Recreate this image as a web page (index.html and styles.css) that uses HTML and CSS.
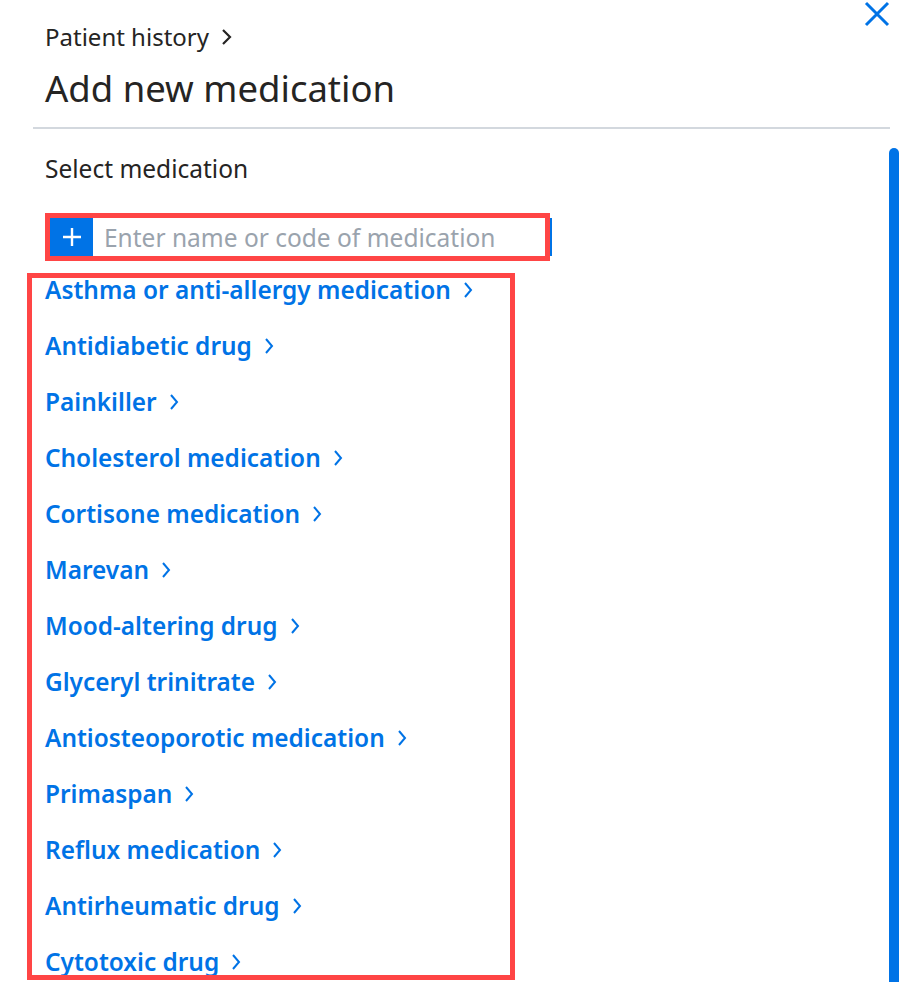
FILE: index.html
```html
<!DOCTYPE html>
<html lang="en">
<head>
  <meta charset="UTF-8" />
  <meta name="viewport" content="width=device-width, initial-scale=1.0" />
  <title>Add new medication</title>
  <link rel="stylesheet" href="styles.css">
</head>
<body>
  <div class="panel">
    <header class="head">
      <div class="head-text">
        <a href="#" class="crumb">Patient history
          <svg class="crumb-chev" width="12" height="18" viewBox="0 0 12 18"><polyline points="2,2 9,9 2,16" /></svg>
        </a>
        <h1>Add new medication</h1>
      </div>
      <button class="close" aria-label="Close">
        <svg width="26" height="26" viewBox="0 0 26 26"><path d="M2 2 L24 24 M24 2 L2 24" /></svg>
      </button>
    </header>

    <div class="scroll">
      <div class="scroll-body">
        <p class="label">Select medication</p>

        <div class="search mark">
          <span class="search-add">
            <svg width="20" height="20" viewBox="0 0 20 20"><path d="M10 1 V19 M1 10 H19" /></svg>
          </span>
          <input type="text" placeholder="Enter name or code of medication" />
        </div>

        <ul class="meds mark">
          <li><a href="#">Asthma or anti-allergy medication <svg class="chev" width="10" height="18" viewBox="0 0 10 18"><polyline points="2,2 8,9 2,16" /></svg></a></li>
          <li><a href="#">Antidiabetic drug <svg class="chev" width="10" height="18" viewBox="0 0 10 18"><polyline points="2,2 8,9 2,16" /></svg></a></li>
          <li><a href="#">Painkiller <svg class="chev" width="10" height="18" viewBox="0 0 10 18"><polyline points="2,2 8,9 2,16" /></svg></a></li>
          <li><a href="#">Cholesterol medication <svg class="chev" width="10" height="18" viewBox="0 0 10 18"><polyline points="2,2 8,9 2,16" /></svg></a></li>
          <li><a href="#">Cortisone medication <svg class="chev" width="10" height="18" viewBox="0 0 10 18"><polyline points="2,2 8,9 2,16" /></svg></a></li>
          <li><a href="#">Marevan <svg class="chev" width="10" height="18" viewBox="0 0 10 18"><polyline points="2,2 8,9 2,16" /></svg></a></li>
          <li><a href="#">Mood-altering drug <svg class="chev" width="10" height="18" viewBox="0 0 10 18"><polyline points="2,2 8,9 2,16" /></svg></a></li>
          <li><a href="#">Glyceryl trinitrate <svg class="chev" width="10" height="18" viewBox="0 0 10 18"><polyline points="2,2 8,9 2,16" /></svg></a></li>
          <li><a href="#">Antiosteoporotic medication <svg class="chev" width="10" height="18" viewBox="0 0 10 18"><polyline points="2,2 8,9 2,16" /></svg></a></li>
          <li><a href="#">Primaspan <svg class="chev" width="10" height="18" viewBox="0 0 10 18"><polyline points="2,2 8,9 2,16" /></svg></a></li>
          <li><a href="#">Reflux medication <svg class="chev" width="10" height="18" viewBox="0 0 10 18"><polyline points="2,2 8,9 2,16" /></svg></a></li>
          <li><a href="#">Antirheumatic drug <svg class="chev" width="10" height="18" viewBox="0 0 10 18"><polyline points="2,2 8,9 2,16" /></svg></a></li>
          <li><a href="#">Cytotoxic drug <svg class="chev" width="10" height="18" viewBox="0 0 10 18"><polyline points="2,2 8,9 2,16" /></svg></a></li>
        </ul>
      </div>
      <div class="scroll-track"><div class="scroll-thumb"></div></div>
    </div>
  </div>
</body>
</html>
```

FILE: styles.css
```css
:root {
  --blue: #0073e6;
  --text: #252423;
  --muted: #9aa3ad;
  --line: #d3d8de;
  --mark: #ff4545;
}

body {
  margin: 0;
  font-family: "Noto Sans", "Open Sans", sans-serif;
  color: var(--text);
  background: #ffffff;
  height: 982px;
  overflow: hidden;
}

.panel {
  padding: 0 14px 0 33px;
}

.head {
  display: flex;
  justify-content: space-between;
  align-items: flex-start;
  margin-right: 9px;
  border-bottom: 2px solid var(--line);
  padding: 0 0 16px 12px;
}

.crumb {
  display: flex;
  width: fit-content;
  align-items: center;
  gap: 12px;
  margin-top: 20px;
  font-size: 24px;
  line-height: 34px;
  color: var(--text);
  text-decoration: none;
}

.crumb-chev polyline {
  fill: none;
  stroke: var(--text);
  stroke-width: 2.2;
}

h1 {
  margin: 11px 0 0 0;
  font-size: 36.5px;
  line-height: 46px;
  font-weight: 400;
}

.close {
  margin: 1px 0 0 0;
  padding: 0;
  border: none;
  background: transparent;
  cursor: pointer;
  line-height: 0;
}

.close path {
  stroke: var(--blue);
  stroke-width: 3;
}

.scroll {
  display: flex;
  justify-content: space-between;
  height: 853px;
}

.scroll-body {
  flex: 1;
}

.label {
  margin: 25px 0 0 12px;
  font-size: 24.5px;
  line-height: 30px;
}

.search {
  display: flex;
  align-items: stretch;
  width: 495px;
  height: 38px;
  margin: 34px 0 0 17px;
}

.search.mark {
  box-shadow: 0 0 0 5px var(--mark), 7px 0 0 0 var(--blue);
}

.search-add {
  display: flex;
  align-items: center;
  justify-content: center;
  width: 43px;
  background: var(--blue);
}

.search-add path {
  stroke: #ffffff;
  stroke-width: 2.4;
}

.search input {
  flex: 1;
  min-width: 0;
  border: none;
  outline: none;
  padding: 0 0 0 11px;
  font-family: inherit;
  font-size: 24.5px;
  color: var(--text);
  background: #ffffff;
}

.search input::placeholder {
  color: var(--muted);
}

.meds {
  list-style: none;
  width: 465px;
  height: 697px;
  margin: 17px 0 0 -6px;
  padding: 0 0 0 13px;
  overflow: hidden;
}

.meds.mark {
  border: 5px solid var(--mark);
}

.meds li {
  height: 56px;
  line-height: 24px;
}

.meds a {
  display: inline-flex;
  align-items: center;
  gap: 12px;
  font-size: 24.4px;
  font-weight: 600;
  color: var(--blue);
  text-decoration: none;
}

.chev polyline {
  fill: none;
  stroke: var(--blue);
  stroke-width: 2;
}

.scroll-track {
  display: flex;
  flex-direction: column;
  width: 10px;
  padding-top: 19px;
}

.scroll-thumb {
  flex: 1;
  background: var(--blue);
  border-radius: 5px 5px 0 0;
}
```
